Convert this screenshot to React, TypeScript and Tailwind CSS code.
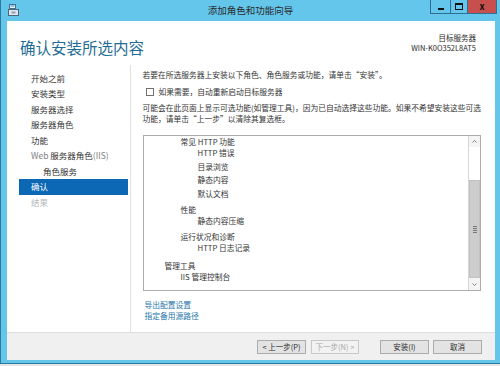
const navItems = [
  { label: '开始之前', state: 'normal', indent: false },
  { label: '安装类型', state: 'normal', indent: false },
  { label: '服务器选择', state: 'normal', indent: false },
  { label: '服务器角色', state: 'normal', indent: false },
  { label: '功能', state: 'normal', indent: false },
  { label: 'Web 服务器角色(IIS)', state: 'web', indent: false },
  { label: '角色服务', state: 'normal', indent: true },
  { label: '确认', state: 'active', indent: false },
  { label: '结果', state: 'disabled', indent: false },
];

// each row of the list box: text, indent class, top gap class
const listRows = [
  { text: '常见 HTTP 功能', cls: 'pl-[37px]' },
  { text: 'HTTP 错误', cls: 'pl-[54px]' },
  { text: '目录浏览', cls: 'pl-[54px] mt-[3px]' },
  { text: '静态内容', cls: 'pl-[54px] mt-[2px]' },
  { text: '默认文档', cls: 'pl-[54px] mt-[3px]' },
  { text: '性能', cls: 'pl-[37px] mt-[5px]' },
  { text: '静态内容压缩', cls: 'pl-[54px]' },
  { text: '运行状况和诊断', cls: 'pl-[37px] mt-[5px]' },
  { text: 'HTTP 日志记录', cls: 'pl-[54px]' },
  { text: '管理工具', cls: 'pl-[21px] mt-[7px]' },
  { text: 'IIS 管理控制台', cls: 'pl-[37px]' },
];

function TitleBar() {
  return (
    <div className="grid h-[21px] grid-cols-[80px_1fr_80px]">
      <div className="flex items-start pl-[7px] pt-[4px]">
        <svg width="11" height="12" viewBox="0 0 11 12">
          <rect x="1.5" y="0.5" width="6" height="4" fill="#e8f3fa" stroke="#4a6f8c" />
          <rect x="2.5" y="1.5" width="4" height="1" fill="#3a8fd0" />
          <rect x="0.5" y="5.5" width="10" height="6" fill="#dfe6ec" stroke="#4e6478" />
          <rect x="3.5" y="7.5" width="4" height="2" fill="#8aa0b4" />
        </svg>
      </div>
      <div className="pt-[3px] text-center text-[9.5px] leading-[14px] text-[#2a2a2a]">
        添加角色和功能向导
      </div>
      <div className="flex items-start justify-end pr-[3px]">
        <div className="flex h-[14px] border border-t-0 border-[#2f6f92]">
          <div className="flex w-[19px] items-end justify-center pb-[3px]">
            <div className="h-[2px] w-[6px] bg-[#111]" />
          </div>
          <div className="flex w-[17px] items-center justify-center border-l border-[#2f6f92]">
            <div className="h-[7px] w-[8px] border-[1.5px] border-t-[2.5px] border-[#111]" />
          </div>
          <div className="flex w-[29px] items-center justify-center border-l border-[#2f6f92] bg-[#c7504f] text-[9px] font-bold leading-none text-[#111]">
            x
          </div>
        </div>
      </div>
    </div>
  );
}

function Scrollbar() {
  return (
    <div className="flex w-[12px] flex-col border-l border-[#d6d6d6] bg-white">
      <div className="flex h-[11px] items-center justify-center bg-[#f4f4f4]">
        <svg width="5" height="3" viewBox="0 0 5 3">
          <path d="M0.5 2.5 L2.5 0.5 L4.5 2.5" fill="none" stroke="#777" strokeWidth="0.9" />
        </svg>
      </div>
      <div className="h-[33px] bg-white" />
      <div className="flex h-[98px] items-center justify-center border border-[#c2c2c2] bg-[#cdcdcd]">
        <div className="flex flex-col gap-[1px]">
          <div className="h-[1px] w-[4px] bg-[#777]" />
          <div className="h-[1px] w-[4px] bg-[#777]" />
          <div className="h-[1px] w-[4px] bg-[#777]" />
          <div className="h-[1px] w-[4px] bg-[#777]" />
        </div>
      </div>
      <div className="flex h-[12px] items-center justify-center bg-[#f4f4f4]">
        <svg width="5" height="3" viewBox="0 0 5 3">
          <path d="M0.5 0.5 L2.5 2.5 L4.5 0.5" fill="none" stroke="#777" strokeWidth="0.9" />
        </svg>
      </div>
    </div>
  );
}

function Button({ label, disabled }: { label: string; disabled?: boolean }) {
  return (
    <div
      className={
        disabled
          ? 'flex h-[14px] w-[48px] items-center justify-center border border-[#c8c8c8] bg-[#f2f2f2] text-[7.5px] text-[#a8a8a8]'
          : 'flex h-[14px] w-[49px] items-center justify-center border border-[#acacac] bg-[#e3e3e3] text-[7.5px] text-[#2a2a2a]'
      }
    >
      {label}
    </div>
  );
}

export default function App() {
  return (
    <div className="h-[366px] w-[500px] overflow-hidden bg-[#e4e4e4] font-['Noto_Sans_CJK_SC','Noto_Sans',sans-serif]">
      <div className="flex h-[364px] flex-col border-b border-l border-[#2c7aa3] bg-[#63c6ea]">
        <TitleBar />
        <div className="mb-[3px] ml-[6px] mr-[5px] flex flex-1 flex-col bg-white">
          {/* header */}
          <div className="flex h-[44px] items-start justify-between">
            <div className="mt-[16px] pl-[13px] text-[15.5px] leading-[20px] text-[#1f6d96]">
              确认安装所选内容
            </div>
            <div className="mt-[12px] pr-[19px] text-right text-[7.5px] leading-[10px] text-[#2a2a2a]">
              <div>目标服务器</div>
              <div>WIN-K0O352L8AT5</div>
            </div>
          </div>

          {/* body */}
          <div className="flex h-[267px]">
            <div className="w-[124px] border-r border-[#e2e2e2] pl-[12px] pr-[2px] pt-[5.5px]">
              {navItems.map((item) => (
                <div
                  key={item.label}
                  className={
                    item.state === 'active'
                      ? 'h-[15.5px] bg-[#0c68b4] pl-[12px] text-[8.5px] leading-[15.5px] text-white'
                      : item.state === 'disabled'
                        ? 'h-[15.5px] pl-[12px] text-[8.5px] leading-[15.5px] text-[#b8b8b8]'
                        : item.indent
                          ? 'h-[15.5px] pl-[24px] text-[8.5px] leading-[15.5px] text-[#333]'
                          : 'h-[15.5px] pl-[12px] text-[8.5px] leading-[15.5px] text-[#333]'
                  }
                >
                  {item.state === 'web' ? (
                    <>
                      <span className="text-[#808080]">Web </span>
                      服务器角色
                      <span className="text-[#808080]">(IIS)</span>
                    </>
                  ) : (
                    item.label
                  )}
                </div>
              ))}
            </div>

            <div className="flex flex-1 flex-col pl-[12px] pr-[14px] pt-[4px] text-[7.75px] text-[#333]">
              <div className="whitespace-nowrap leading-[12px]">
                若要在所选服务器上安装以下角色、角色服务或功能，请单击“安装”。
              </div>
              <div className="mt-[5px] flex h-[12px] items-center">
                <div className="ml-[3px] h-[8px] w-[8px] border border-[#707070] bg-white" />
                <span className="ml-[5px]">如果需要，自动重新启动目标服务器</span>
              </div>
              <div className="mt-[5px] whitespace-nowrap leading-[10.5px]">
                可能会在此页面上显示可选功能(如管理工具)，因为已自动选择这些功能。如果不希望安装这些可选
                <br />
                功能，请单击“上一步”以清除其复选框。
              </div>

              <div className="mt-[11px] flex h-[156px] border border-[#acacac]">
                <div className="flex-1 overflow-hidden">
                  {listRows.map((row) => (
                    <div key={row.text} className={'h-[11px] leading-[11px] ' + row.cls}>
                      {row.text}
                    </div>
                  ))}
                </div>
                <Scrollbar />
              </div>

              <div className="mt-[7.5px] pl-[2px] leading-[11px] text-[#2676ad]">
                <div>导出配置设置</div>
                <div>指定备用源路径</div>
              </div>
            </div>
          </div>

          {/* footer */}
          <div className="flex flex-1 items-center justify-end border-t border-[#dedede] bg-[#f0f0f0] pr-[13px]">
            <Button label="< 上一步(P)" />
            <div className="w-[5px]" />
            <Button label="下一步(N) >" disabled />
            <div className="w-[21px]" />
            <Button label="安装(I)" />
            <div className="w-[4px]" />
            <Button label="取消" />
          </div>
        </div>
      </div>
    </div>
  );
}
